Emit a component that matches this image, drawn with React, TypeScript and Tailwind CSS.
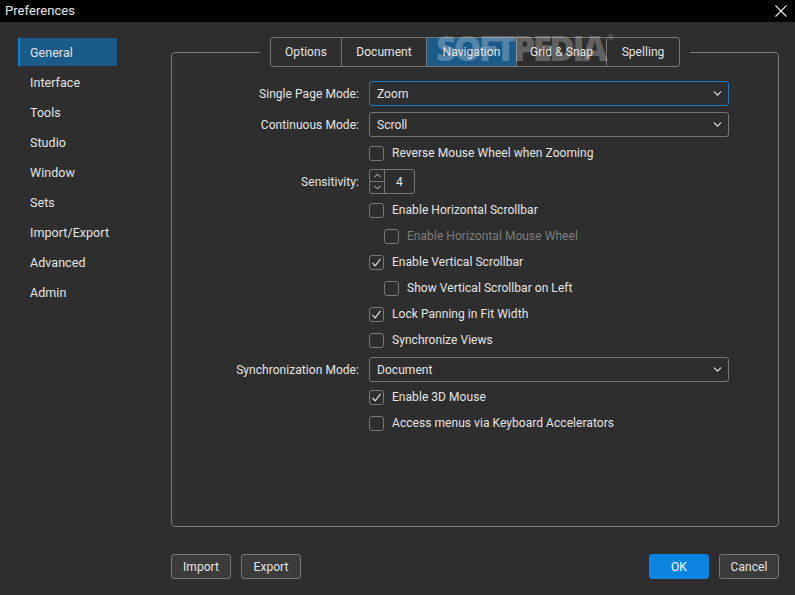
import type { ReactNode } from 'react'
import { ChevronDown, ChevronUp } from 'lucide-react'

const navItems = ['General', 'Interface', 'Tools', 'Studio', 'Window', 'Sets', 'Import/Export', 'Advanced', 'Admin']
const tabs = ['Options', 'Document', 'Navigation', 'Grid & Snap', 'Spelling']
const tabWidths = ['w-[70px]', 'w-[85px]', 'w-[90px]', 'w-[90px]', 'w-[73px]']

function Select({ value, focused = false }: { value: string; focused?: boolean }) {
  return (
    <div
      className={
        'flex h-[25px] w-[360px] items-center justify-between rounded-[3px] border pl-[7px] pr-[4px] ' +
        (focused ? 'border-[#1f7ab8]' : 'border-[#777777]')
      }
    >
      <span>{value}</span>
      <ChevronDown size={13} strokeWidth={2} className="text-[#e8e8e8]" />
    </div>
  )
}

function Row({ label, children }: { label?: string; children: ReactNode }) {
  return (
    <div className="flex items-center">
      <div className="w-[197px] pr-[10px] text-right">{label}</div>
      {children}
    </div>
  )
}

function Check({
  label,
  checked = false,
  indent = false,
  disabled = false,
}: {
  label: string
  checked?: boolean
  indent?: boolean
  disabled?: boolean
}) {
  return (
    <Row>
      <div className={'flex h-[26px] items-center gap-2 ' + (indent ? 'pl-[15px] ' : '') + (disabled ? 'text-[#7d7d7d]' : '')}>
        <span className="flex size-[15px] items-center justify-center rounded-[3px] border border-[#777777]">
          {checked && (
            <svg width="11" height="11" viewBox="0 0 11 11" fill="none" stroke="#e6e6e6" strokeWidth="1.1">
              <path d="M1.5 6 L4.2 8.8 L9.5 1.8" />
            </svg>
          )}
        </span>
        <span>{label}</span>
      </div>
    </Row>
  )
}

function Button({ label, className = '' }: { label: string; className?: string }) {
  return (
    <button className={'h-[25px] w-[60px] rounded-[3px] border ' + className}>{label}</button>
  )
}

export default function App() {
  return (
    <div className="flex h-[595px] w-[795px] flex-col overflow-hidden bg-[#2e2e2e] font-['Roboto',sans-serif] text-[12px] tracking-[0.05px] text-[#e4e4e4]">
      <header className="flex h-[22px] shrink-0 items-center justify-between bg-black pl-[5px] pr-[8px]">
        <span className="text-[13px] text-[#e8e8e8]">Preferences</span>
        <svg width="12" height="12" viewBox="0 0 12 12" stroke="#f0f0f0" strokeWidth="1.1">
          <path d="M0.5 0.5 L11.5 11.5 M11.5 0.5 L0.5 11.5" />
        </svg>
      </header>

      <div className="flex flex-1">
        <nav className="ml-[18px] mt-[16px] w-[99px] text-[12.5px]">
          {navItems.map((item, i) => (
            <div key={item} className="flex h-[30px] items-start">
              <div
                className={
                  'flex h-[28px] w-full items-center pt-[3px] ' +
                  (i === 0 ? 'border-l-2 border-[#0f7fd0] bg-[#1b5b8a] pl-[10px]' : 'pl-[12px]')
                }
              >
                {item}
              </div>
            </div>
          ))}
        </nav>

        <main className="ml-[54px] flex w-[608px] flex-col">
          <div className="relative z-10 mt-[15px] flex h-[30px] justify-center">
            <div className="relative bg-[#2e2e2e] px-[10px]">
              <div className="flex h-[30px] rounded-[3px] border border-[#777777]">
                {tabs.map((tab, i) => (
                  <div
                    key={tab}
                    className={
                      'flex items-center justify-center ' +
                      tabWidths[i] +
                      (i > 0 ? ' border-l border-[#777777]' : '') +
                      (i === 2 ? ' bg-[#1b5b8a]' : '')
                    }
                  >
                    <span className="relative z-10">{tab}</span>
                  </div>
                ))}
              </div>
              {/* watermark sits over the tab fills, under the labels */}
              <div className="pointer-events-none absolute left-[176px] top-[-9px] flex font-['Open_Sans',sans-serif] text-[35px] font-extrabold leading-[40px] tracking-[-2.6px] text-white/25">
                SOFTPEDIA
                <span className="ml-[3px] mt-[5px] font-['Roboto',sans-serif] text-[8px] leading-[10px] tracking-normal text-white/30">®</span>
              </div>
            </div>
          </div>

          <section className="-mt-[15px] h-[475px] rounded-[4px] border border-[#7c7c7c] pt-[28px]">
            <Row label="Single Page Mode:">
              <Select value="Zoom" focused />
            </Row>
            <div className="mt-[6px]">
              <Row label="Continuous Mode:">
                <Select value="Scroll" />
              </Row>
            </div>
            <div className="mt-[3px]">
              <Check label="Reverse Mouse Wheel when Zooming" />
            </div>
            <div className="my-[3px]">
              <Row label="Sensitivity:">
                <div className="flex h-[25px] w-[46px] rounded-[3px] border border-[#777777]">
                  <div className="flex w-[15px] flex-col border-r border-[#777777]">
                    <div className="flex h-1/2 items-center justify-center border-b border-[#777777]">
                      <ChevronUp size={11} strokeWidth={2} />
                    </div>
                    <div className="flex h-1/2 items-center justify-center">
                      <ChevronDown size={11} strokeWidth={2} />
                    </div>
                  </div>
                  <div className="flex flex-1 items-center justify-center">4</div>
                </div>
              </Row>
            </div>
            <Check label="Enable Horizontal Scrollbar" />
            <Check label="Enable Horizontal Mouse Wheel" indent disabled />
            <Check label="Enable Vertical Scrollbar" checked />
            <Check label="Show Vertical Scrollbar on Left" indent />
            <Check label="Lock Panning in Fit Width" checked />
            <Check label="Synchronize Views" />
            <div className="mb-[2px] mt-[4px]">
              <Row label="Synchronization Mode:">
                <Select value="Document" />
              </Row>
            </div>
            <Check label="Enable 3D Mouse" checked />
            <Check label="Access menus via Keyboard Accelerators" />
          </section>

          <footer className="mt-[27px] flex justify-between">
            <div className="flex gap-[10px]">
              <Button label="Import" className="border-[#777777] bg-[#3b3b3b]" />
              <Button label="Export" className="border-[#777777] bg-[#3b3b3b]" />
            </div>
            <div className="flex gap-[10px]">
              <Button label="OK" className="border-[#0a84e0] bg-[#0a84e0] text-white" />
              <Button label="Cancel" className="border-[#777777] bg-[#3b3b3b]" />
            </div>
          </footer>
        </main>
      </div>
    </div>
  )
}
